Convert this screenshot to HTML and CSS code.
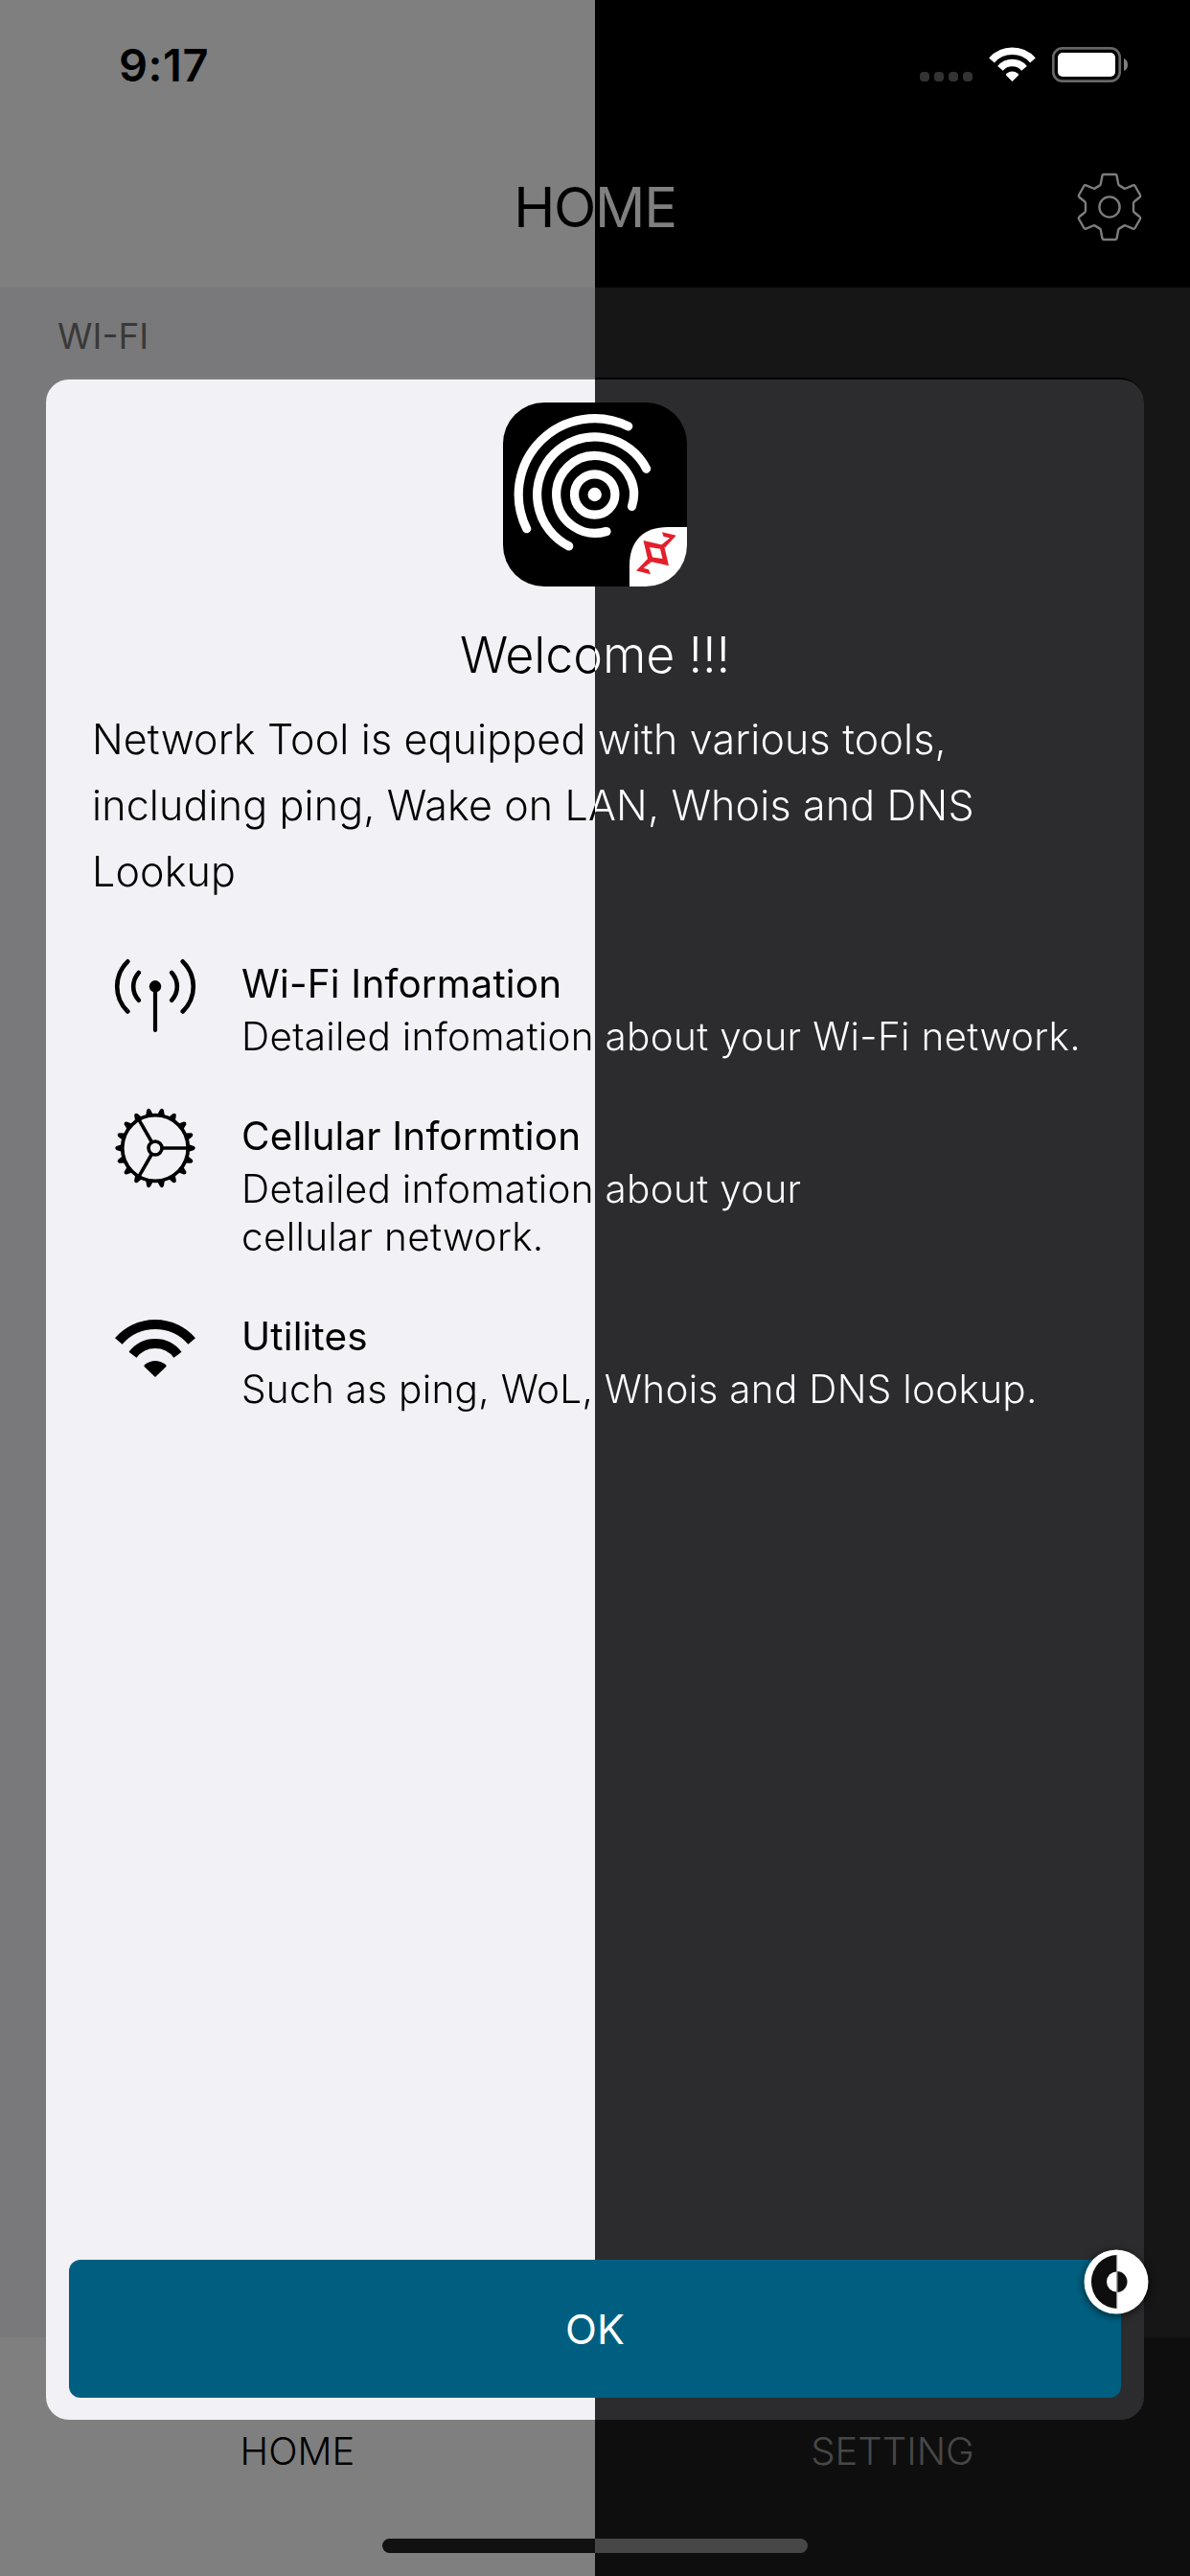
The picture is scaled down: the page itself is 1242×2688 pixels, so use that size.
FILE: index.html
```html
<!DOCTYPE html>
<html lang="en">
<head>
<meta charset="utf-8">
<title>Network Tool</title>
<link rel="stylesheet" href="styles.css">
</head>
<body>
<div class="phone">
  <header class="top">
    <div class="status">
      <span class="time">9:17</span>
      <svg class="status-icons" width="220" height="40" viewBox="958 47 220 40">
        <g fill="#333">
          <rect x="960" y="75" width="10" height="10" rx="4"/><rect x="975" y="75" width="10" height="10" rx="4"/><rect x="990" y="75" width="10" height="10" rx="4"/><rect x="1005" y="75" width="10" height="10" rx="4"/>
        </g>
        <g fill="none" stroke="#fff" stroke-width="7.5">
          <path d="M1035 62.9A28.8 28.8 0 0 1 1078 62.9"/>
          <path d="M1044 71.4A16.4 16.4 0 0 1 1069 71.4"/>
        </g>
        <path d="M1056.500 85L1050 78.500Q1049.500 77.500 1050.500 76.800Q1056.500 72.400 1062.500 76.800Q1063.500 77.500 1063 78.500Z" fill="#fff"/>
        <rect x="1099.300" y="50.300" width="69.400" height="34.400" rx="9.500" fill="none" stroke="#666" stroke-width="2.700"/>
        <rect x="1104" y="55" width="60" height="25" rx="5" fill="#fff"/>
        <path d="M1173 61Q1177 62.500 1177 67.500Q1177 72.500 1173 74Z" fill="#808080"/>
      </svg>
    </div>
    <div class="nav">
      <h1 class="nav-title split">HOME</h1>
      <svg class="gear" width="72" height="76" viewBox="-36 -38 72 76" fill="none" stroke="#7d7d7d" stroke-width="2.400" stroke-linejoin="round">
        <path d="M-6 -34H6Q7.300 -34 7.600 -32.500L9.200 -24Q9.400 -23 10.400 -22.400L15 -19.600Q16 -19 17.100 -19.500L24.500 -22.700Q25.900 -23.200 26.600 -22L32 -12.500Q32.600 -11.300 31.600 -10.300L26 -5.700Q25.100 -5 25 -4V4Q25.100 5 26 5.700L31.600 10.300Q32.600 11.300 32 12.500L26.600 22Q25.900 23.200 24.500 22.700L17.100 19.500Q16 19 15 19.600L10.400 22.400Q9.400 23 9.200 24L7.600 32.500Q7.300 34 6 34H-6Q-7.300 34 -7.600 32.500L-9.200 24Q-9.400 23 -10.400 22.400L-15 19.600Q-16 19 -17.100 19.500L-24.500 22.700Q-25.900 23.200 -26.600 22L-32 12.500Q-32.600 11.300 -31.600 10.300L-26 5.700Q-25.100 5 -25 4V-4Q-25.100 -5 -26 -5.700L-31.600 -10.300Q-32.600 -11.300 -32 -12.500L-26.600 -22Q-25.900 -23.200 -24.500 -22.700L-17.100 -19.500Q-16 -19 -15 -19.600L-10.400 -22.400Q-9.400 -23 -9.200 -24L-7.600 -32.500Q-7.300 -34 -6 -34Z"/>
        <circle r="10.600"/>
      </svg>
    </div>
  </header>

  <main class="list">
    <h2 class="section">WI-FI</h2>
    <div class="list-card"></div>
  </main>

  <nav class="tabs">
    <div class="tab">HOME</div>
    <div class="tab tab-setting">SETTING</div>
    <div class="home-bar"></div>
  </nav>

  <section class="modal">
    <svg class="app-icon" width="192" height="192" viewBox="0 0 192 192">
      <defs><clipPath id="tile"><rect width="192" height="192" rx="43"/></clipPath></defs>
      <g clip-path="url(#tile)">
        <rect width="192" height="192" fill="#000"/>
        <circle cx="95.700" cy="96" r="7.200" fill="#fff"/>
        <g fill="none" stroke="#fff" stroke-width="9.200" stroke-linecap="round">
          <circle cx="95.700" cy="96" r="21.200"/>
          <path d="M108 134.500A40.400 40.400 0 1 1 134.500 108.400"/>
          <path d="M68.700 149.900A60.200 60.200 0 1 1 149.600 69.100"/>
          <path d="M24.700 131.700A79.400 79.400 0 0 1 130.700 24.800"/>
        </g>
        <path d="M132 192V170C132 144 147 130 172 130H192V192Z" fill="#fff"/>
        <g fill="#e2202c">
          <path fill-rule="evenodd" d="M146.500 144L168 149L173 170.300L151.500 165.500ZM153 151L156 161.500L166.500 163L164 152.700Z"/>
          <path d="M166 135.200L180.700 138.800L169 151.500L165 148.800L174 141.600L167.500 139.800Z"/>
          <path d="M139 175.500L152 162L156 165.500L146.500 172.800L152 174.200L154 179.200Z"/>
        </g>
      </g>
    </svg>
    <h2 class="welcome split">Welcome !!!</h2>
    <p class="intro split">Network Tool is equipped with various tools,<br>including ping, Wake on LAN, Whois and DNS<br>Lookup</p>
    <ul class="features">
      <li class="feature">
        <svg class="icon-antenna" width="84" height="76" viewBox="120 1001 84 76" fill="none" stroke="#000" stroke-linecap="round">
          <path d="M162 1028V1074" stroke-width="4.200"/>
          <circle cx="162" cy="1028.300" r="6.200" fill="#000" stroke="none"/>
          <path stroke-width="4.600" d="M133.300 1002.300C118.500 1017 118.500 1040 133.300 1054.500M190.700 1002.300C205.500 1017 205.500 1040 190.700 1054.500M144.800 1014C137.300 1022.500 137.300 1034.500 144.800 1042.700M179.200 1014C186.700 1022.500 186.700 1034.500 179.200 1042.700"/>
        </svg>
        <div class="feature-text">
          <h3 class="feature-title split">Wi-Fi Information</h3>
          <p class="feature-desc split">Detailed infomation about your Wi-Fi network.</p>
        </div>
      </li>
      <li class="feature">
        <svg class="icon-cog" width="84" height="84" viewBox="-42 -42 84 84" fill="none" stroke="#000">
          <defs><path id="tooth" d="M34.500 -4L40.500 -1.900Q43 0 40.500 1.900L34.500 4Z" fill="#000" stroke="none"/></defs>
          <circle r="34.300" stroke-width="3.800"/>
          <circle r="7" stroke-width="3.600"/>
          <path stroke-width="3.600" d="M8 0H34M-4 -7L-17.200 -29.800M-4 7L-17.200 29.800"/>
          <use href="#tooth"/><use href="#tooth" transform="rotate(20)"/><use href="#tooth" transform="rotate(40)"/><use href="#tooth" transform="rotate(60)"/><use href="#tooth" transform="rotate(80)"/><use href="#tooth" transform="rotate(100)"/><use href="#tooth" transform="rotate(120)"/><use href="#tooth" transform="rotate(140)"/><use href="#tooth" transform="rotate(160)"/><use href="#tooth" transform="rotate(180)"/><use href="#tooth" transform="rotate(200)"/><use href="#tooth" transform="rotate(220)"/><use href="#tooth" transform="rotate(240)"/><use href="#tooth" transform="rotate(260)"/><use href="#tooth" transform="rotate(280)"/><use href="#tooth" transform="rotate(300)"/><use href="#tooth" transform="rotate(320)"/><use href="#tooth" transform="rotate(340)"/>
        </svg>
        <div class="feature-text">
          <h3 class="feature-title split">Cellular Informtion</h3>
          <p class="feature-desc split">Detailed infomation about your<br>cellular network.</p>
        </div>
      </li>
      <li class="feature">
        <svg class="icon-wifi" width="84" height="62" viewBox="120 1375 84 62">
          <g fill="none" stroke="#000" stroke-width="10">
            <path d="M123.800 1398.500A50.500 50.500 0 0 1 200.200 1398.500"/>
            <path d="M138.500 1412.800A29.300 29.300 0 0 1 185.500 1412.800"/>
          </g>
          <path d="M162 1436L150.600 1425Q150 1424 151 1423Q162 1415 173 1423Q174 1424 173.400 1425Z"/>
        </svg>
        <div class="feature-text">
          <h3 class="feature-title split">Utilites</h3>
          <p class="feature-desc split">Such as ping, WoL, Whois and DNS lookup.</p>
        </div>
      </li>
    </ul>
    <button class="ok">OK</button>
  </section>

  <svg class="contrast" width="68" height="68" viewBox="-34 -34 68 68">
    <circle r="33.500" fill="#fff"/>
    <path d="M1 -28A27 28 0 0 0 1 28Z" fill="#0e0e0e"/>
    <path d="M0.500 -10.500A10.500 10.500 0 0 0 0.500 10.500Z" fill="#fff"/>
    <path d="M0.500 -11A11 11 0 0 1 0.500 11Z" fill="#0e0e0e"/>
    <path d="M0.800 -28V28" stroke="#bbb" stroke-width="1.200"/>
  </svg>
</div>
</body>
</html>
```
FILE: styles.css
```css
* { box-sizing: border-box; margin: 0; padding: 0; }

body { font-family: Inter, "Liberation Sans", sans-serif; background: #000; }

.phone {
  position: relative;
  width: 1242px;
  height: 2688px;
  display: grid;
  grid-template-rows: 300px 2139px 249px;
  overflow: hidden;
}

/* Text whose colour changes where the light theme meets the dark one */
.split {
  --at: 50%;
  --light: #000;
  --dark: #fff;
  color: transparent;
  background-image: linear-gradient(to right, var(--light) var(--at), var(--dark) var(--at));
  -webkit-background-clip: text;
  background-clip: text;
}

.top { background: linear-gradient(to right, #7f7f7f 50%, #000 50%); }

.status {
  height: 132px;
  padding: 0 64px 0 124px;
  display: flex;
  justify-content: space-between;
  align-items: flex-start;
}
.time { margin-top: 38px; font-size: 47px; line-height: 60px; font-weight: 600; letter-spacing: 0.5px; }
.status-icons { margin-top: 47px; display: block; }

.nav {
  height: 168px;
  padding: 0 48px;
  display: grid;
  grid-template-columns: 72px 1fr 72px;
  align-items: center;
}
.nav-title { grid-column: 2; font-size: 58px; line-height: 72px; font-weight: 400; letter-spacing: -1.3px; text-align: center; --dark: #808080; }
.gear { display: block; }

.list { background: linear-gradient(to right, #79797b 50%, #161616 50%); padding: 0 48px; }
.section { height: 94px; padding: 24px 0 0 12px; font-size: 37px; line-height: 54px; font-weight: 400; color: #393939; }
.list-card { height: 400px; border-radius: 26px; background: linear-gradient(to right, #7f7f7f 50%, #000 50%); }

.tabs {
  background: linear-gradient(to right, #7f7f7f 50%, #0e0e0e 50%);
  display: grid;
  grid-template-columns: 1fr 1fr;
  grid-template-rows: 210px 15px;
  justify-items: center;
}
.tab { padding-top: 92px; font-size: 40px; line-height: 54px; font-weight: 300; color: #000; }
.tab-setting { color: #474747; }
.home-bar { grid-column: 1 / 3; width: 444px; height: 15px; border-radius: 8px; background: linear-gradient(to right, #111 50%, #474747 50%); }

.modal {
  position: absolute;
  left: 48px;
  top: 396px;
  width: 1146px;
  height: 2129px;
  padding: 24px 24px 23px;
  border-radius: 24px;
  background: linear-gradient(to right, #f2f1f6 50%, #2c2c2e 50%);
  display: flex;
  flex-direction: column;
}
.app-icon { align-self: center; display: block; }
.welcome { margin-top: 39px; font-size: 52px; line-height: 66px; font-weight: 300; letter-spacing: -0.15px; text-align: center; }
.intro { --at: 525px; margin: 20px 0 0 24px; font-size: 43px; line-height: 69px; font-weight: 300; letter-spacing: 0.15px; white-space: nowrap; }

.features { margin: 57px 0 0 48px; list-style: none; display: flex; flex-direction: column; gap: 53px; }
.feature { display: grid; grid-template-columns: 84px 1fr; column-gap: 48px; align-items: start; }
.feature svg { display: block; overflow: visible; }
.icon-antenna { margin-top: 1px; }
.icon-cog { margin-top: -4px; }
.icon-wifi { margin-top: 7px; }
.feature-title { --at: 369px; font-size: 40.5px; line-height: 52px; font-weight: 400; letter-spacing: 0.15px; white-space: nowrap; }
.feature-desc { --at: 369px; margin-top: 4px; font-size: 40.5px; line-height: 50px; font-weight: 300; letter-spacing: 0.28px; white-space: nowrap; }

.ok {
  margin-top: auto;
  height: 144px;
  border: 0;
  border-radius: 12px;
  background: #005f80;
  color: #fff;
  font: 400 43px/54px Inter, "Liberation Sans", sans-serif;
}

.contrast {
  position: absolute;
  left: 1131px;
  top: 2347px;
  border-radius: 50%;
  box-shadow: 0 2px 9px rgba(0, 0, 0, 0.6);
}
```
